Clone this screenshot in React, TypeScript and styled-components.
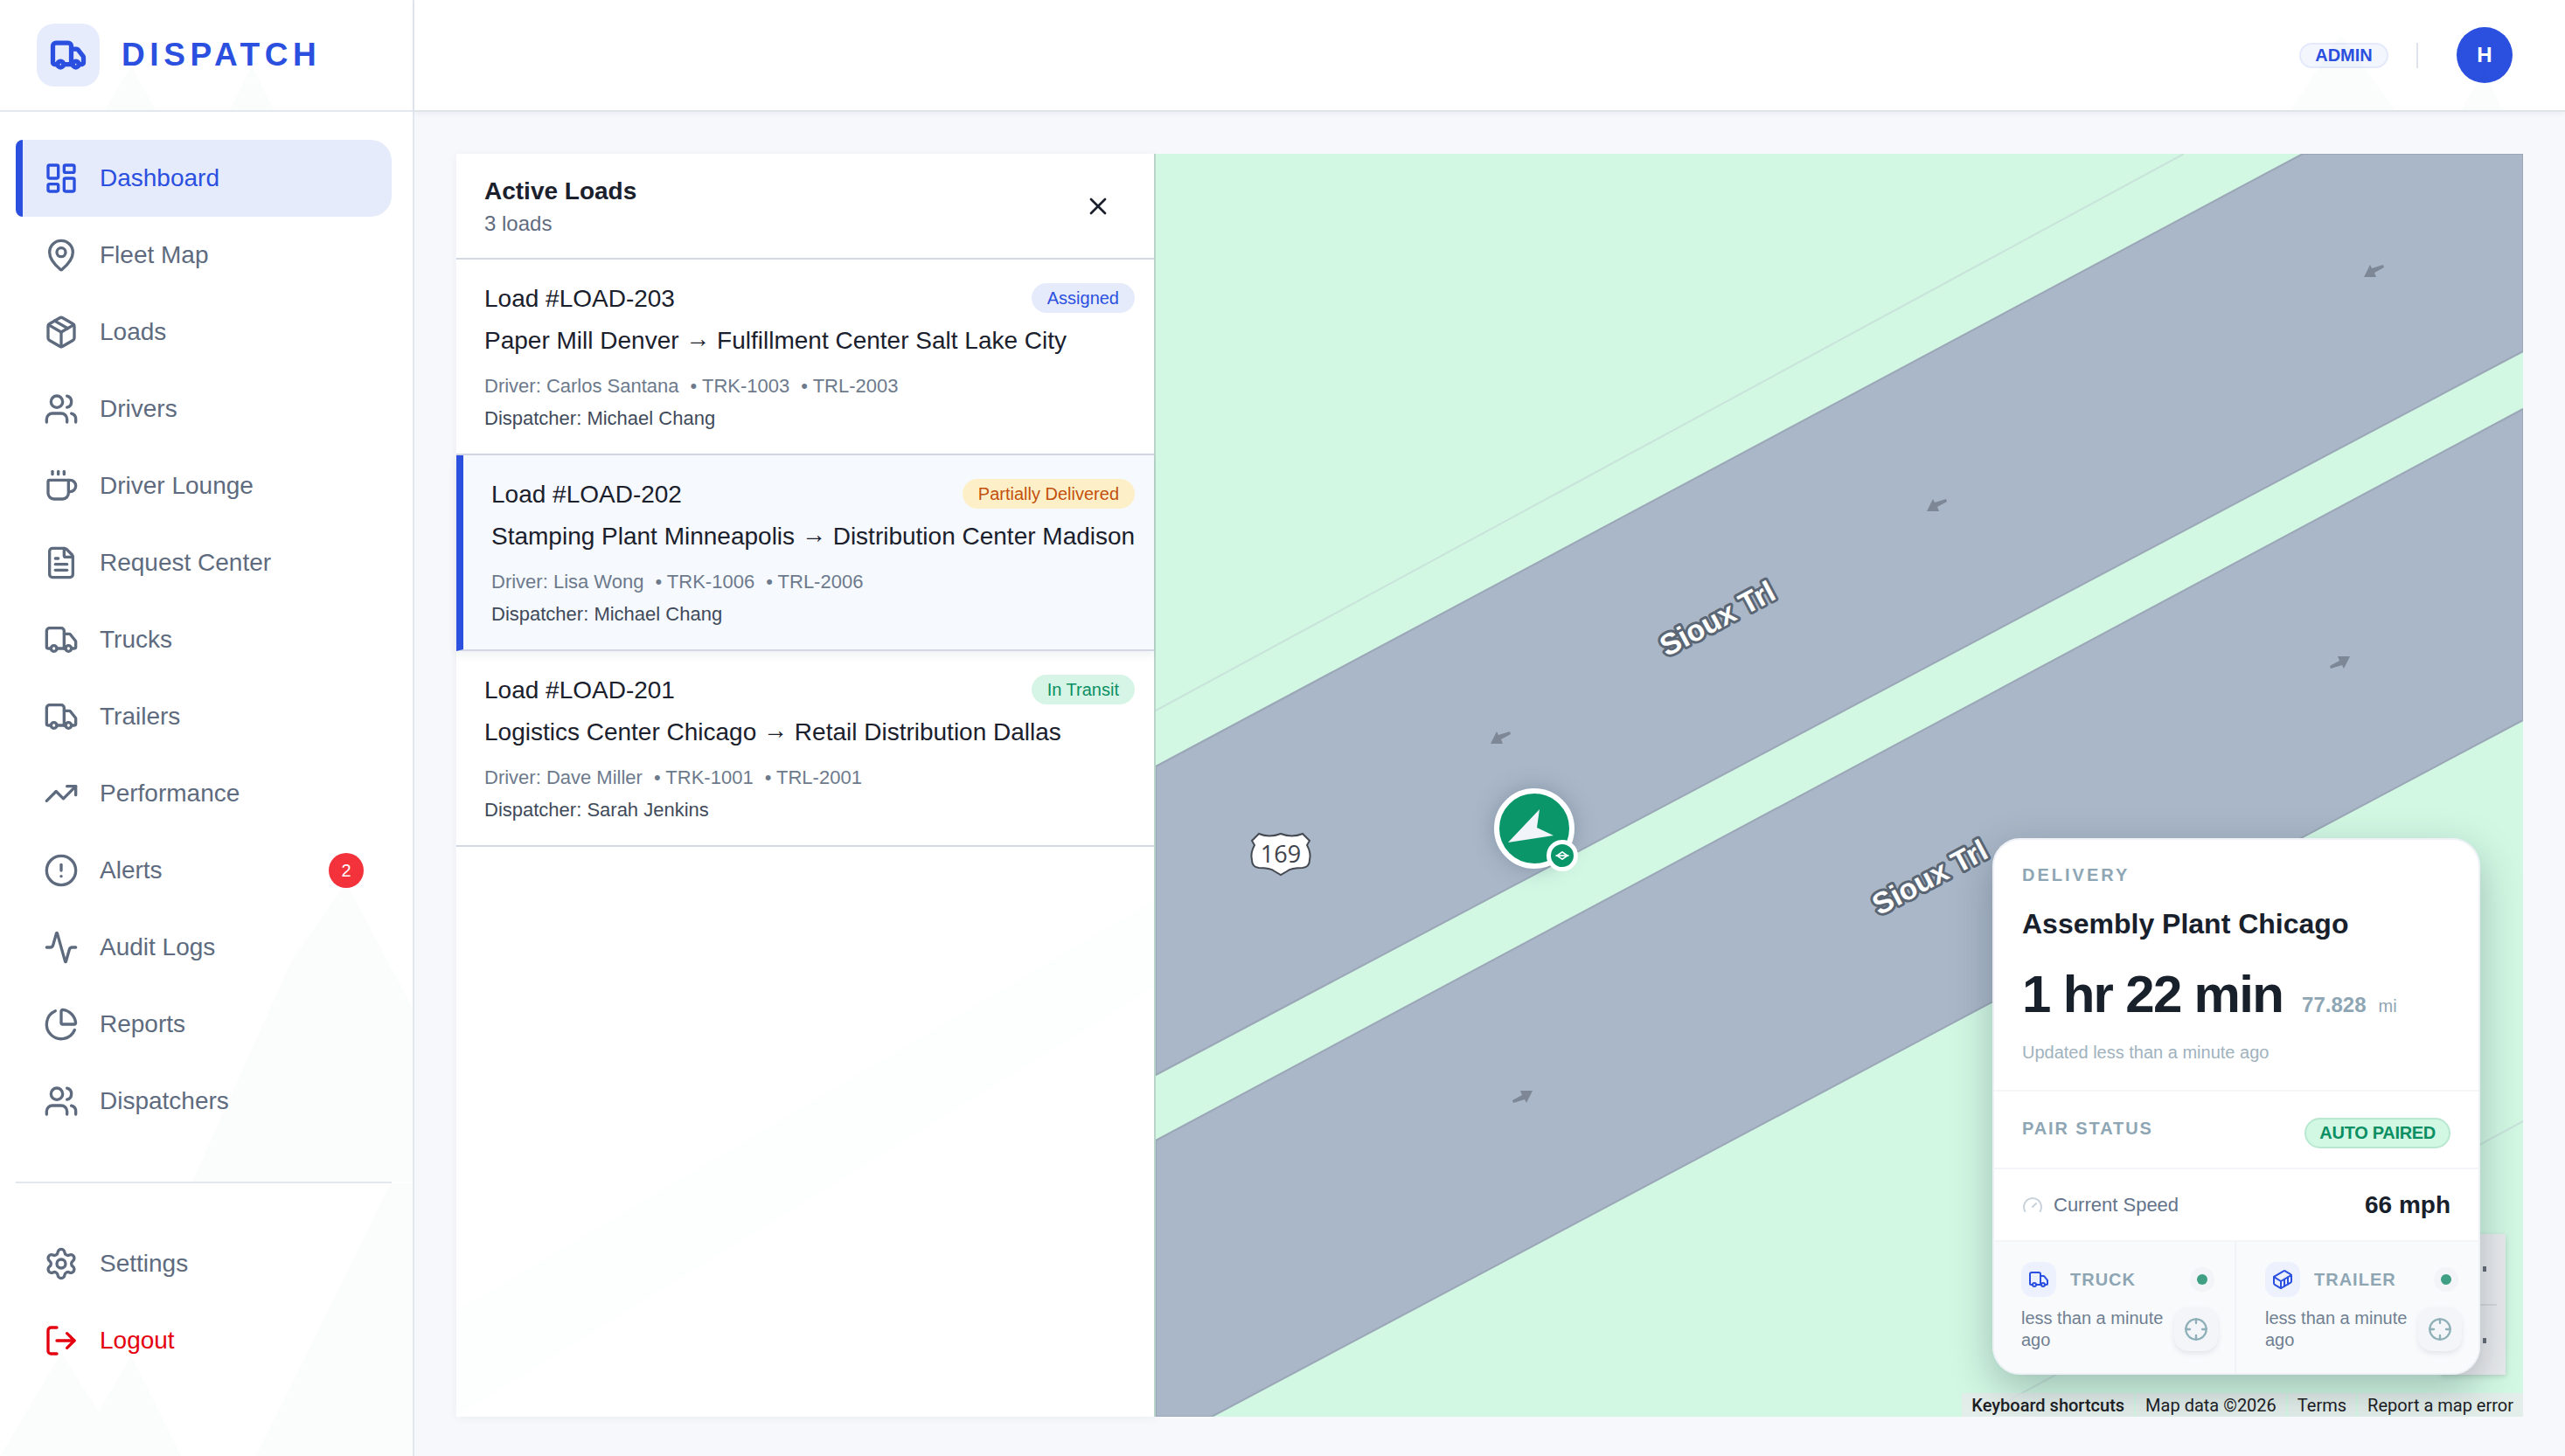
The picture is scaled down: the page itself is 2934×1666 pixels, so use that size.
import styled, { createGlobalStyle } from "styled-components";
import {
  Activity,
  ChartPie,
  CircleAlert,
  Coffee,
  Container,
  Crosshair,
  FileText,
  Gauge,
  LayoutDashboard,
  LogOut,
  MapPin,
  Package,
  Settings,
  TrendingUp,
  Truck,
  Users,
  X,
} from "lucide-react";

const blue = "#2b50e0";
const muted = "#8ea6b4";

const GlobalStyle = createGlobalStyle`
  html, body {
    margin: 0;
    padding: 0;
    background: #f7f8fc;
    font-family: "Liberation Sans", Arial, sans-serif;
  }
  * {
    box-sizing: border-box;
  }
`;

const Shell = styled.div`
  display: flex;
  width: 2934px;
  height: 1666px;
  overflow: hidden;
  position: relative;
`;

const Decor = styled.svg`
  position: absolute;
  left: 0;
  top: 0;
  pointer-events: none;
  z-index: 5;
  polygon {
    fill: rgba(20, 90, 80, 0.014);
  }
`;

const Sidebar = styled.aside`
  width: 474px;
  flex-shrink: 0;
  background: #fff;
  border-right: 2px solid #e3e7ee;
  display: flex;
  flex-direction: column;
`;

const Brand = styled.div`
  height: 128px;
  border-bottom: 2px solid #e3e7ee;
  display: flex;
  align-items: center;
  gap: 25px;
  padding: 0 0 0 42px;
`;

const BrandIcon = styled.div`
  width: 72px;
  height: 72px;
  border-radius: 20px;
  background: #e7ecfd;
  color: ${blue};
  display: flex;
  align-items: center;
  justify-content: center;
`;

const BrandName = styled.div`
  font-size: 37px;
  font-weight: 700;
  letter-spacing: 5.6px;
  color: ${blue};
`;

const Nav = styled.nav<{ $flush?: boolean }>`
  padding: ${(p) => (p.$flush ? "0" : "32px")} 24px 0 18px;
`;

const NavRow = styled.div<{ $active?: boolean; $danger?: boolean }>`
  position: relative;
  height: 88px;
  display: flex;
  align-items: center;
  gap: 24px;
  padding: 0 32px 0 32px;
  font-size: 28px;
  border-radius: 8px 24px 24px 8px;
  background: ${(p) => (p.$active ? "#e6ebfc" : "transparent")};
  color: ${(p) => (p.$active ? blue : p.$danger ? "#e5000f" : "#5e6b7e")};
  &::before {
    content: "";
    display: ${(p) => (p.$active ? "block" : "none")};
    position: absolute;
    left: 0;
    top: 0;
    bottom: 0;
    width: 8px;
    border-radius: 8px 0 0 8px;
    background: ${blue};
  }
`;

const NavLabel = styled.span`
  flex: 1;
`;

const Count = styled.span`
  width: 40px;
  height: 40px;
  border-radius: 50%;
  background: #f4323c;
  color: #fff;
  font-size: 20px;
  display: flex;
  align-items: center;
  justify-content: center;
`;

const NavDivider = styled.div`
  height: 2px;
  margin: 48px 24px 48px 18px;
  background: #e3e7ee;
`;

const Content = styled.div`
  flex: 1;
  display: flex;
  flex-direction: column;
  min-width: 0;
`;

const TopBar = styled.header`
  height: 128px;
  background: #fff;
  border-bottom: 2px solid #dfe4e9;
  box-shadow: 0 2px 6px rgba(30, 50, 80, 0.06);
  display: flex;
  align-items: center;
  justify-content: flex-end;
  padding: 0 60px 0 0;
`;

const RolePill = styled.div`
  height: 29px;
  width: 102px;
  border-radius: 15px;
  background: #f3f6fd;
  border: 2px solid #e4eafb;
  color: ${blue};
  font-size: 20px;
  font-weight: 700;
  display: flex;
  align-items: center;
  justify-content: center;
`;

const TopDivider = styled.div`
  width: 2px;
  height: 29px;
  background: #dfe4ec;
  margin: 0 44px 0 32px;
`;

const Avatar = styled.div`
  width: 64px;
  height: 64px;
  border-radius: 50%;
  background: ${blue};
  color: #fff;
  font-size: 24px;
  font-weight: 700;
  display: flex;
  align-items: center;
  justify-content: center;
`;

const Main = styled.main`
  flex: 1;
  display: flex;
  padding: 48px 48px 45px 48px;
  min-height: 0;
`;

const LoadsPanel = styled.section`
  width: 800px;
  flex-shrink: 0;
  background: #fff;
  border-right: 2px solid #b9d5c9;
  box-shadow: 0 2px 10px rgba(30, 50, 80, 0.05);
`;

const PanelHead = styled.div`
  height: 121px;
  border-bottom: 2px solid #d3d8e4;
  display: flex;
  align-items: center;
  justify-content: space-between;
  padding: 0 48px 0 32px;
`;

const PanelHeading = styled.div`
  margin-top: 4px;
`;

const PanelTitle = styled.div`
  font-size: 28px;
  font-weight: 700;
  color: #1a202c;
  line-height: 36px;
`;

const PanelSub = styled.div`
  font-size: 24px;
  color: #5f6b7e;
  line-height: 37px;
`;

const LoadRow = styled.div<{ $selected?: boolean }>`
  height: 224px;
  border-bottom: 2px solid #d3d8e4;
  padding: 28px 22px 0 32px;
  background: ${(p) => (p.$selected ? "#f6f9fe" : "transparent")};
  border-left: ${(p) => (p.$selected ? `8px solid ${blue}` : "none")};
  box-shadow: ${(p) => (p.$selected ? "0 4px 10px rgba(30, 50, 80, 0.08)" : "none")};
  position: relative;
`;

const LoadTop = styled.div`
  height: 34px;
  display: flex;
  align-items: center;
  justify-content: space-between;
  font-size: 28px;
  color: #1a202c;
`;

const Status = styled.span<{ $tone: "blue" | "amber" | "green" }>`
  height: 34px;
  margin-top: -2px;
  padding: 0 18px;
  border-radius: 17px;
  font-size: 20px;
  display: flex;
  align-items: center;
  background: ${(p) =>
    p.$tone === "blue" ? "#e6ebfb" : p.$tone === "amber" ? "#fdf0c8" : "#d7f5e6"};
  color: ${(p) =>
    p.$tone === "blue" ? blue : p.$tone === "amber" ? "#c2500c" : "#0a8f62"};
`;

const Route = styled.div`
  margin-top: 13px;
  font-size: 28px;
  line-height: 36px;
  color: #1a202c;
  white-space: nowrap;
`;

const RouteArrow = styled.span`
  position: relative;
  top: -2px;
  font-weight: 700;
`;

const Meta = styled.div`
  margin-top: 19px;
  font-size: 22px;
  line-height: 30px;
  color: #6d7a8c;
  white-space: nowrap;
`;

const MetaPart = styled.span`
  margin-left: 13px;
`;

const Dispatcher = styled.div`
  margin-top: 7px;
  font-size: 22px;
  line-height: 30px;
  color: #3f4a5a;
`;

const MapArea = styled.div`
  flex: 1;
  position: relative;
  background: #d2f8e4;
  overflow: hidden;
`;

const MapDrawing = styled.svg`
  position: absolute;
  left: 0;
  top: 0;
`;

const VehiclePin = styled.div`
  position: absolute;
  left: 387px;
  top: 726px;
  width: 92px;
  height: 92px;
  border-radius: 50%;
  border: 6px solid #fff;
  background: #0a9669;
  box-shadow: 0 0 24px rgba(70, 90, 110, 0.35);
`;

const PinBadge = styled.div`
  position: absolute;
  left: 54px;
  top: 53px;
  width: 36px;
  height: 36px;
  border-radius: 50%;
  border: 5px solid #fff;
  background: #0a9669;
  display: flex;
  align-items: center;
  justify-content: center;
`;

const ZoomControl = styled.div`
  position: absolute;
  left: 1470px;
  top: 1236px;
  width: 74px;
  height: 161px;
  background: #e9ebee;
  box-shadow: 0 2px 6px rgba(0, 0, 0, 0.15);
  display: flex;
  justify-content: flex-end;
`;

const ZoomMarks = styled.div`
  width: 29px;
  display: flex;
  flex-direction: column;
  align-items: flex-start;
  justify-content: space-between;
  padding: 37px 0 36px 3px;
  &::before,
  &::after {
    content: "";
    width: 4px;
    height: 6px;
    background: #666d78;
  }
`;

const ZoomRule = styled.div`
  width: 19px;
  height: 2px;
  margin-left: -3px;
  background: #d6d9dd;
`;

const Attribution = styled.div`
  position: absolute;
  right: 0;
  bottom: 0;
  height: 27px;
  display: flex;
  gap: 2px;
  font-family: Roboto, "Liberation Sans", sans-serif;
  font-size: 20px;
  color: #1c2024;
`;

const AttrItem = styled.span<{ $strong?: boolean }>`
  display: flex;
  align-items: center;
  padding: 0 11px;
  background: rgba(232, 234, 236, 0.78);
  font-weight: ${(p) => (p.$strong ? 500 : 400)};
`;

const TripCard = styled.div`
  position: absolute;
  right: 49px;
  bottom: 48px;
  width: 558px;
  height: 614px;
  border-radius: 32px;
  background: #fff;
  border: 2px solid #eef1f6;
  overflow: hidden;
  z-index: 2;
`;

const CardShadow = styled.div`
  position: absolute;
  right: 49px;
  bottom: 48px;
  width: 558px;
  height: 614px;
  border-radius: 32px;
  box-shadow: 0 16px 48px rgba(20, 40, 50, 0.28);
  z-index: 1;
`;

const TripTop = styled.div`
  padding: 28px 32px 0 32px;
  height: 288px;
  border-bottom: 2px solid #f3f5f9;
`;

const Caption = styled.div<{ $spacing: number }>`
  font-size: 20px;
  line-height: 24px;
  font-weight: 700;
  letter-spacing: ${(p) => p.$spacing}px;
  color: ${muted};
`;

const Destination = styled.div`
  margin-top: 24px;
  font-size: 32px;
  line-height: 40px;
  font-weight: 700;
  color: #18202c;
`;

const EtaRow = styled.div`
  margin-top: 29px;
  height: 64px;
  display: flex;
  align-items: baseline;
  gap: 22px;
`;

const Eta = styled.span`
  font-size: 60px;
  line-height: 64px;
  font-weight: 700;
  letter-spacing: -1.7px;
  color: #18202c;
`;

const Miles = styled.span`
  font-size: 24px;
  font-weight: 700;
  color: ${muted};
`;

const MilesUnit = styled.span`
  font-size: 20px;
  color: ${muted};
  margin-left: -8px;
`;

const Updated = styled.div`
  margin-top: 20px;
  font-size: 20px;
  line-height: 28px;
  color: #9fb2be;
`;

const PairRow = styled.div`
  height: 89px;
  border-bottom: 2px solid #f3f5f9;
  padding: 0 32px;
  display: flex;
  align-items: center;
  justify-content: space-between;
`;

const PairCaption = styled(Caption)`
  margin-bottom: 4px;
`;

const PairPill = styled.span`
  height: 35px;
  margin-top: 8px;
  padding: 0 15px;
  border-radius: 18px;
  border: 2px solid #b8e8cf;
  background: #d2f7e3;
  color: #0a8f62;
  font-size: 20px;
  font-weight: 700;
  letter-spacing: -0.3px;
  display: flex;
  align-items: center;
`;

const SpeedRow = styled.div`
  height: 83px;
  border-bottom: 2px solid #f3f5f9;
  padding: 0 32px;
  display: flex;
  align-items: center;
  gap: 12px;
  color: #c9d2da;
`;

const SpeedLabel = styled.span`
  flex: 1;
  font-size: 22px;
  color: #64748b;
`;

const SpeedValue = styled.span`
  font-size: 28px;
  font-weight: 700;
  color: #18202c;
`;

const Units = styled.div`
  display: grid;
  grid-template-columns: 1fr 1fr;
  height: 150px;
  background: #f9fafc;
`;

const Unit = styled.div`
  padding: 23px 19px 0 31px;
  &:first-child {
    border-right: 2px solid #f1f3f7;
  }
  &:last-child {
    padding-left: 33px;
  }
`;

const UnitHead = styled.div`
  display: flex;
  align-items: center;
  gap: 16px;
`;

const UnitIcon = styled.div`
  width: 40px;
  height: 40px;
  border-radius: 13px;
  background: #edf1fd;
  color: ${blue};
  display: flex;
  align-items: center;
  justify-content: center;
`;

const UnitName = styled.span`
  flex: 1;
  font-size: 20px;
  font-weight: 700;
  letter-spacing: 1px;
  color: ${muted};
`;

const Dot = styled.span`
  width: 12px;
  height: 12px;
  margin-right: 12px;
  border-radius: 50%;
  background: #3f9f85;
  box-shadow: 0 0 0 8px rgba(120, 140, 150, 0.05);
`;

const UnitFoot = styled.div`
  margin-top: 12px;
  display: flex;
  align-items: flex-start;
  justify-content: space-between;
`;

const UnitTime = styled.div`
  width: 170px;
  font-size: 20px;
  line-height: 25px;
  color: #6f7f91;
`;

const LocateBtn = styled.div`
  width: 50px;
  height: 50px;
  border-radius: 16px;
  background: #f3f5f8;
  box-shadow: 0 3px 6px rgba(30, 50, 80, 0.1);
  color: #8fb0b8;
  display: flex;
  align-items: center;
  justify-content: center;
`;

const navItems = [
  { label: "Dashboard", icon: LayoutDashboard, active: true },
  { label: "Fleet Map", icon: MapPin },
  { label: "Loads", icon: Package },
  { label: "Drivers", icon: Users },
  { label: "Driver Lounge", icon: Coffee },
  { label: "Request Center", icon: FileText },
  { label: "Trucks", icon: Truck },
  { label: "Trailers", icon: Truck },
  { label: "Performance", icon: TrendingUp },
  { label: "Alerts", icon: CircleAlert, count: 2 },
  { label: "Audit Logs", icon: Activity },
  { label: "Reports", icon: ChartPie },
  { label: "Dispatchers", icon: Users },
];

const loads = [
  {
    id: "LOAD-203",
    status: "Assigned",
    tone: "blue" as const,
    from: "Paper Mill Denver",
    to: "Fulfillment Center Salt Lake City",
    driver: "Carlos Santana",
    truck: "TRK-1003",
    trailer: "TRL-2003",
    dispatcher: "Michael Chang",
  },
  {
    id: "LOAD-202",
    status: "Partially Delivered",
    tone: "amber" as const,
    from: "Stamping Plant Minneapolis",
    to: "Distribution Center Madison",
    driver: "Lisa Wong",
    truck: "TRK-1006",
    trailer: "TRL-2006",
    dispatcher: "Michael Chang",
    selected: true,
  },
  {
    id: "LOAD-201",
    status: "In Transit",
    tone: "green" as const,
    from: "Logistics Center Chicago",
    to: "Retail Distribution Dallas",
    driver: "Dave Miller",
    truck: "TRK-1001",
    trailer: "TRL-2001",
    dispatcher: "Sarah Jenkins",
  },
];

// road direction arrows, [x, y, angle] inside the map
const arrows = [
  [1393, 134, 0],
  [893, 402, 0],
  [1355, 582, 180],
  [394, 668, 0],
  [420, 1079, 180],
];

const RoadLabel = ({ x, y }: { x: number; y: number }) => (
  <text
    x={x}
    y={y}
    transform={`rotate(-28 ${x} ${y})`}
    textAnchor="middle"
    fontFamily="Liberation Sans, sans-serif"
    fontWeight="700"
    fontSize="34"
    fill="#fff"
    stroke="#5b6675"
    strokeWidth="6"
    strokeLinejoin="round"
    paintOrder="stroke"
  >
    Sioux Trl
  </text>
);

const MapLayer = () => (
  <MapDrawing width="1564" height="1445" viewBox="0 0 1564 1445">
    <line x1="0" y1="637" x2="1176" y2="0" stroke="#c8e4da" strokeWidth="2" />
    <line x1="941" y1="1445" x2="1564" y2="1107" stroke="#c8e4da" strokeWidth="2" />
    <polygon
      points="0,701 1312,0 1564,0 1564,226 0,1054"
      fill="#a9b7c8"
      stroke="#9ba6b7"
      strokeWidth="2"
    />
    <polygon
      points="0,1129 1564,292 1564,648 64,1445 0,1445"
      fill="#a9b7c8"
      stroke="#9ba6b7"
      strokeWidth="2"
    />
    {arrows.map(([x, y, a]) => (
      <path
        key={`${x}-${y}`}
        transform={`translate(${x} ${y}) rotate(${a})`}
        d="M-11 7 L-4 -7 L-2 -3 L11 -7 L12 -4 L1 2 L3 7 Z"
        fill="#7d8796"
      />
    ))}
    <RoadLabel x={648} y={542} />
    <RoadLabel x={891} y={838} />
    <path
      d="M118 778 Q130 783 143 778 Q156 783 168 778 L176 786 L173 791 Q178 800 176 808 Q176 816 168 817 Q155 817 150 821 L143 825 L136 821 Q131 817 118 817 Q110 816 110 808 Q108 800 113 791 L110 786 Z"
      fill="#fff"
      stroke="#454a52"
      strokeWidth="2"
    />
    <text
      x="143"
      y="811"
      textAnchor="middle"
      fontFamily="Open Sans, sans-serif"
      fontSize="27"
      fill="#3f444c"
    >
      169
    </text>
  </MapDrawing>
);

const App = () => (
  <Shell>
    <GlobalStyle />
    <Decor width="2934" height="1666" viewBox="0 0 2934 1666">
      <polygon points="120,126 150,75 178,126" />
      <polygon points="263,126 288,75 313,126" />
      <polygon points="2620,126 2677,40 2740,126" />
      <polygon points="2815,126 2842,80 2862,126" />
      <polygon points="396,1010 472,1154 472,1352 220,1352 333,1100" />
      <polygon points="447,1354 472,1354 472,1666 293,1666" />
      <polygon points="0,1666 70,1548 113,1615 150,1551 207,1666" />
      <polygon points="522,1500 1320,1030 1320,1130 522,1620" opacity="0.5" />
    </Decor>

    <Sidebar>
      <Brand>
        <BrandIcon>
          <Truck size={42} strokeWidth={3} />
        </BrandIcon>
        <BrandName>DISPATCH</BrandName>
      </Brand>
      <Nav>
        {navItems.map(({ label, icon: Icon, active, count }) => (
          <NavRow key={label} $active={active}>
            <Icon size={40} strokeWidth={2} />
            <NavLabel>{label}</NavLabel>
            {count ? <Count>{count}</Count> : null}
          </NavRow>
        ))}
      </Nav>
      <NavDivider />
      <Nav $flush>
        <NavRow>
          <Settings size={40} strokeWidth={2} />
          <NavLabel>Settings</NavLabel>
        </NavRow>
        <NavRow $danger>
          <LogOut size={40} strokeWidth={2} />
          <NavLabel>Logout</NavLabel>
        </NavRow>
      </Nav>
    </Sidebar>

    <Content>
      <TopBar>
        <RolePill>ADMIN</RolePill>
        <TopDivider />
        <Avatar>H</Avatar>
      </TopBar>
      <Main>
        <LoadsPanel>
          <PanelHead>
            <PanelHeading>
              <PanelTitle>Active Loads</PanelTitle>
              <PanelSub>3 loads</PanelSub>
            </PanelHeading>
            <X size={32} color="#1a202c" />
          </PanelHead>
          {loads.map((l) => (
            <LoadRow key={l.id} $selected={l.selected}>
              <LoadTop>
                <span>Load #{l.id}</span>
                <Status $tone={l.tone}>{l.status}</Status>
              </LoadTop>
              <Route>
                {l.from} <RouteArrow>→</RouteArrow> {l.to}
              </Route>
              <Meta>
                Driver: {l.driver}
                <MetaPart>• {l.truck}</MetaPart>
                <MetaPart>• {l.trailer}</MetaPart>
              </Meta>
              <Dispatcher>Dispatcher: {l.dispatcher}</Dispatcher>
            </LoadRow>
          ))}
        </LoadsPanel>

        <MapArea>
          <MapLayer />
          <VehiclePin>
            <svg width="80" height="80" viewBox="0 0 80 80">
              <polygon points="46,18 43,39 62,48 10,56" fill="#f1f4f8" />
            </svg>
            <PinBadge>
              <svg width="16" height="10" viewBox="0 0 18 12">
                <path d="M9 1 L16 6 L9 11 L2 6 Z" fill="none" stroke="#fff" strokeWidth="2" />
                <path d="M0 6 H18" stroke="#fff" strokeWidth="2" />
              </svg>
            </PinBadge>
          </VehiclePin>
          <ZoomControl>
            <ZoomMarks>
              <ZoomRule />
            </ZoomMarks>
          </ZoomControl>
          <Attribution>
            <AttrItem $strong>Keyboard shortcuts</AttrItem>
            <AttrItem>Map data ©2026</AttrItem>
            <AttrItem>Terms</AttrItem>
            <AttrItem>Report a map error</AttrItem>
          </Attribution>
          <CardShadow />
          <TripCard>
            <TripTop>
              <Caption $spacing={3}>DELIVERY</Caption>
              <Destination>Assembly Plant Chicago</Destination>
              <EtaRow>
                <Eta>1 hr 22 min</Eta>
                <Miles>77.828</Miles>
                <MilesUnit>mi</MilesUnit>
              </EtaRow>
              <Updated>Updated less than a minute ago</Updated>
            </TripTop>
            <PairRow>
              <PairCaption $spacing={1.9}>PAIR STATUS</PairCaption>
              <PairPill>AUTO PAIRED</PairPill>
            </PairRow>
            <SpeedRow>
              <Gauge size={24} />
              <SpeedLabel>Current Speed</SpeedLabel>
              <SpeedValue>66 mph</SpeedValue>
            </SpeedRow>
            <Units>
              <Unit>
                <UnitHead>
                  <UnitIcon>
                    <Truck size={24} />
                  </UnitIcon>
                  <UnitName>TRUCK</UnitName>
                  <Dot />
                </UnitHead>
                <UnitFoot>
                  <UnitTime>less than a minute ago</UnitTime>
                  <LocateBtn>
                    <Crosshair size={28} />
                  </LocateBtn>
                </UnitFoot>
              </Unit>
              <Unit>
                <UnitHead>
                  <UnitIcon>
                    <Container size={24} />
                  </UnitIcon>
                  <UnitName>TRAILER</UnitName>
                  <Dot />
                </UnitHead>
                <UnitFoot>
                  <UnitTime>less than a minute ago</UnitTime>
                  <LocateBtn>
                    <Crosshair size={28} />
                  </LocateBtn>
                </UnitFoot>
              </Unit>
            </Units>
          </TripCard>
        </MapArea>
      </Main>
    </Content>
  </Shell>
);

export default App;
